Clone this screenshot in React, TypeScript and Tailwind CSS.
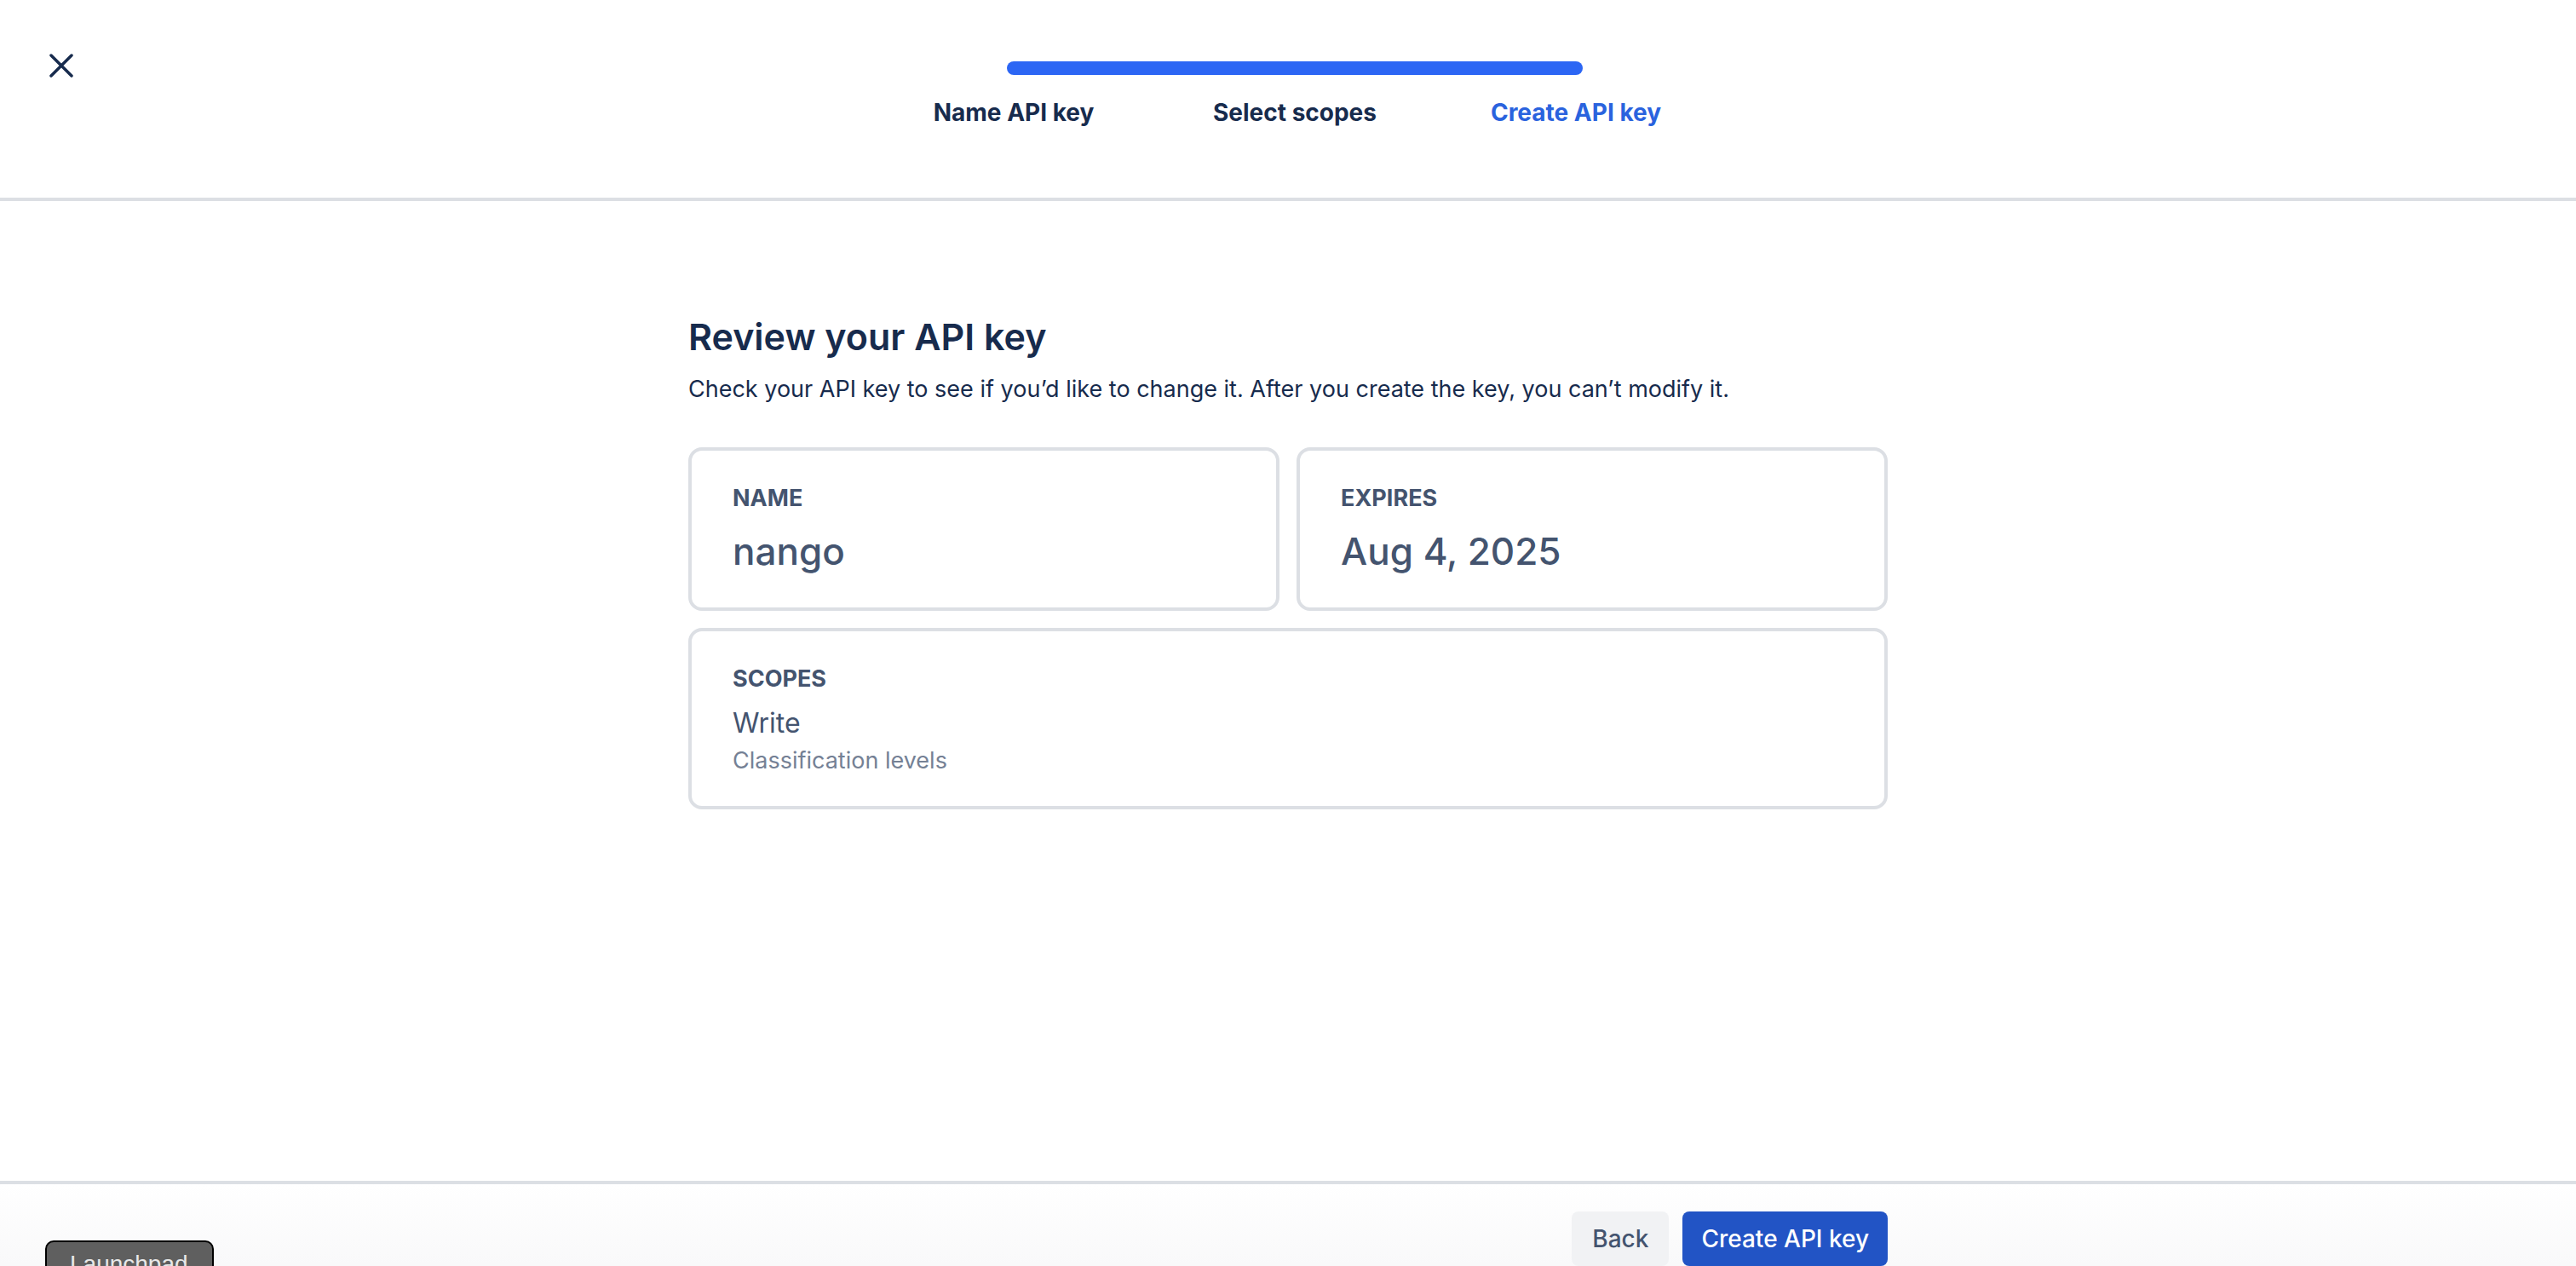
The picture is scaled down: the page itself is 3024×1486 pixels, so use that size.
import React from "react";

const steps = [
  { label: "Name API key", active: false },
  { label: "Select scopes", active: false },
  { label: "Create API key", active: true },
];

function CloseIcon() {
  return (
    <svg width="28" height="28" viewBox="0 0 28 28" fill="none" stroke="#172b4d" strokeWidth="3.5" strokeLinecap="round">
      <path d="M2 2L26 26M26 2L2 26" />
    </svg>
  );
}

function Header() {
  return (
    <header className="grid h-[236px] shrink-0 grid-cols-[1fr_auto_1fr] border-b-4 border-[#dcdfe4]">
      <div className="pl-[58px] pt-[63px]">
        <button type="button" className="block">
          <CloseIcon />
        </button>
      </div>
      <div className="ml-4 w-[990px] pt-[72px]">
        {/* full bar, every step done */}
        <div className="mx-[157px] h-4 rounded-full bg-[#2c66f4]" />
        <ol className="mt-6 grid grid-cols-3 text-center text-[28px] font-bold leading-10">
          {steps.map((s) => (
            <li key={s.label} className={s.active ? "text-[#2a63de]" : "text-[#172b4d]"}>
              {s.label}
            </li>
          ))}
        </ol>
      </div>
      <div />
    </header>
  );
}

function InfoCard({ label, value }: { label: string; value: string }) {
  return (
    <div className="rounded-2xl border-4 border-[#dcdfe4] px-12 pb-[38px] pt-10">
      <p className="text-[27px] font-bold leading-8 text-[#44546f]">{label}</p>
      <p className="mt-[18px] text-[44px] font-medium leading-[56px] text-[#44546f]">{value}</p>
    </div>
  );
}

function ScopesCard() {
  return (
    <div className="col-span-2 rounded-2xl border-4 border-[#dcdfe4] px-12 pb-[37px] pt-10">
      <p className="text-[27px] font-bold leading-8 text-[#44546f]">SCOPES</p>
      <p className="mt-4 text-[32px] leading-10 text-[#44546f]">Write</p>
      <p className="mt-2 text-[27px] leading-8 text-[#758195]">Classification levels</p>
    </div>
  );
}

export default function App() {
  return (
    <div className="relative flex h-[1486px] flex-col overflow-hidden bg-white font-['Inter',sans-serif]">
      <Header />

      <main className="flex-1">
        <div className="mx-auto w-[1408px] pt-[133px]">
          <h2 className="text-[43px] font-semibold leading-[52px] text-[#172b4d]">Review your API key</h2>
          <p className="mt-4 text-[27px] leading-10 text-[#172b4d]">
            Check your API key to see if you’d like to change it. After you create the key, you can’t modify it.
          </p>
          <div className="mt-12 grid grid-cols-2 gap-5">
            <InfoCard label="NAME" value="nango" />
            <InfoCard label="EXPIRES" value="Aug 4, 2025" />
            <ScopesCard />
          </div>
        </div>
      </main>

      <footer className="h-[100px] shrink-0 border-t-4 border-[#dcdfe4] bg-linear-to-b from-white to-[#f9f9fa]">
        <div className="mx-auto flex w-[1408px] justify-end gap-4 pt-8">
          <button type="button" className="h-16 rounded-lg bg-[#f1f2f4] px-6 text-[28px] font-medium text-[#44546f]">
            Back
          </button>
          <button type="button" className="h-16 rounded-lg bg-[#2254c5] px-[22px] text-[28px] font-medium text-white">
            Create API key
          </button>
        </div>
      </footer>

      {/* dev widget floating over the corner */}
      <div className="absolute left-[53px] top-[1456px] h-[64px] w-[198px] rounded-[10px] border-2 border-black bg-[#5f5f5f] pl-[27px] pt-2 font-['Liberation_Sans',sans-serif] text-[28px] leading-9 text-[#e8e8e8]">
        Launchpad
      </div>
    </div>
  );
}
